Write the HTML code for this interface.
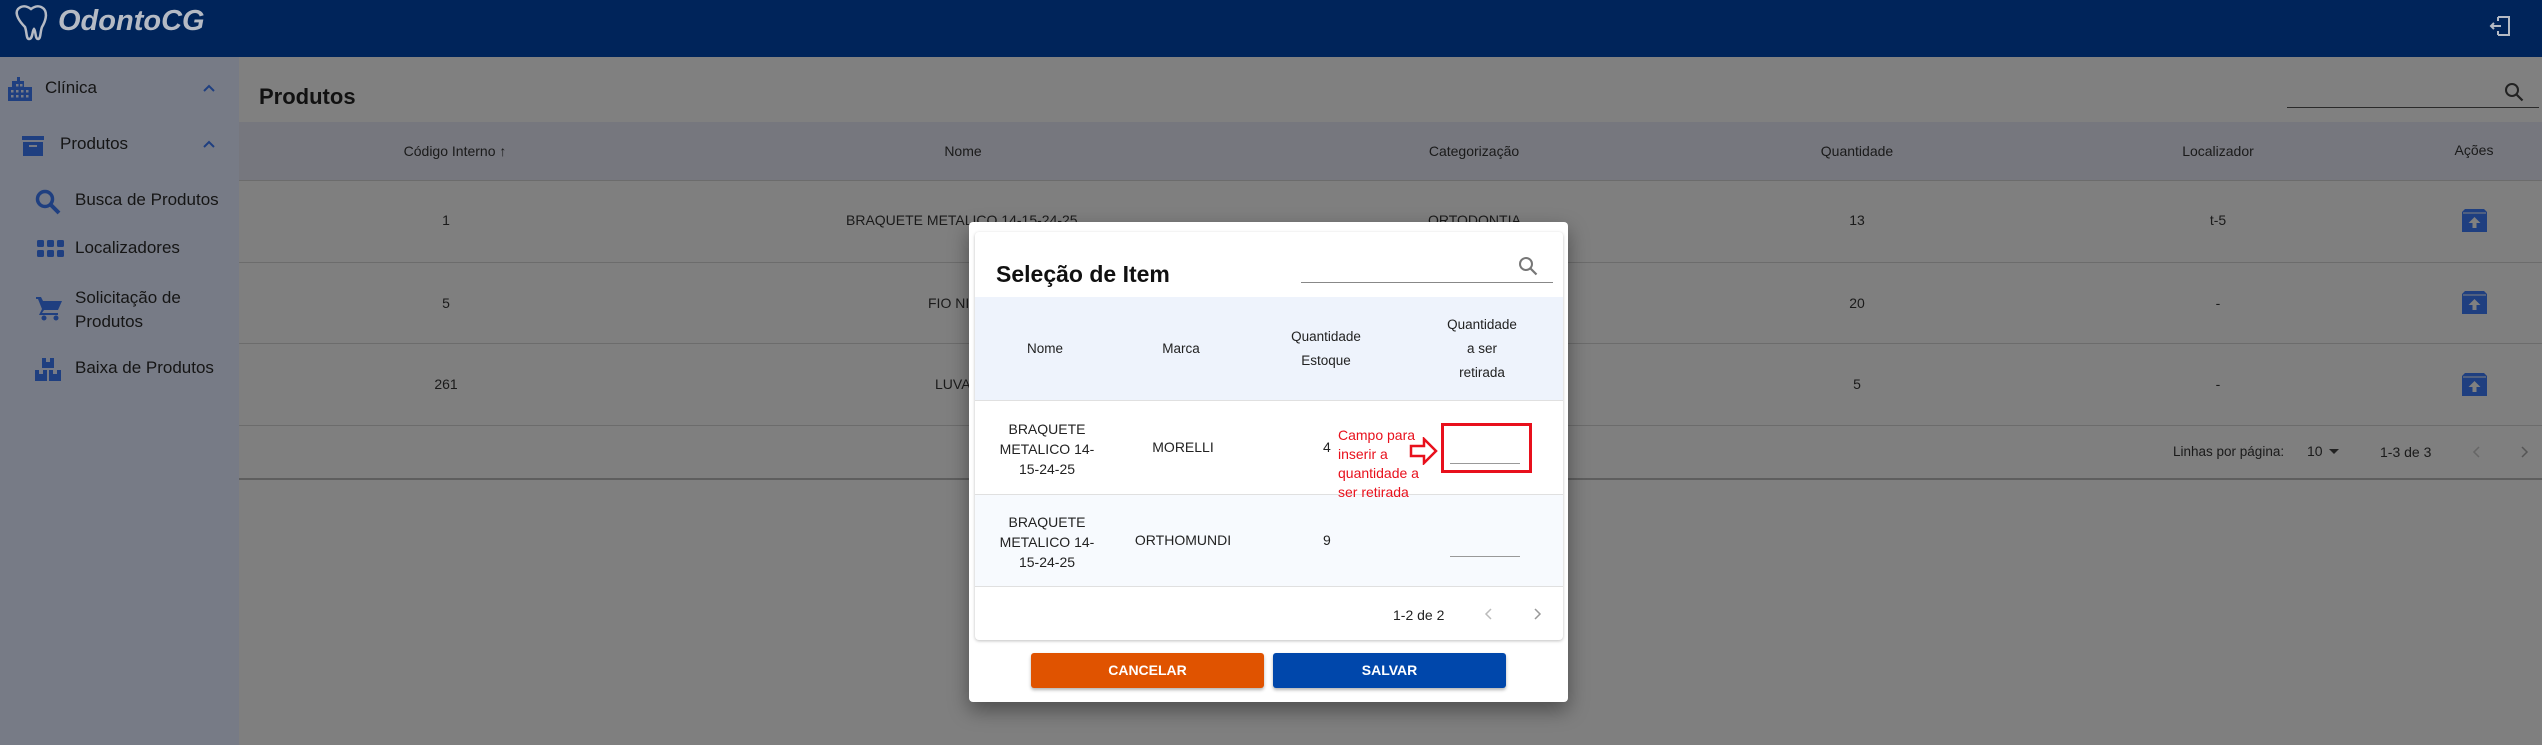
<!DOCTYPE html>
<html><head><meta charset="utf-8"><style>
*{margin:0;padding:0;box-sizing:border-box}
body{width:2542px;height:745px;overflow:hidden;background:#7f7f7f;font-family:"Liberation Sans",sans-serif;position:relative;color:#111}
.abs{position:absolute}
.hdr{left:0;top:0;width:2542px;height:57px;background:#00245a;box-shadow:0 2px 4px rgba(0,0,0,.4)}
.side{left:0;top:57px;width:239px;height:688px;background:#777b86}
.st{font-size:17px;color:#151515;white-space:nowrap}
.c{transform:translateX(-50%);white-space:nowrap}
.th{font-size:14px;color:#1a1a1a}
.td{font-size:14px;color:#1a1a1a}
.hl{height:1px;background:#6c6c6c}
.ic{fill:#1f3f80}
.modal{left:969px;top:222px;width:599px;height:480px;background:#fff;border-radius:4px;box-shadow:0 8px 20px rgba(0,0,0,.4)}
.m{font-size:14px;color:#222}
.mh{font-size:13.5px;color:#222;text-align:center;line-height:24px}
.red{color:#e8101c;font-size:14px;line-height:19px}
</style></head><body>
<div class="abs hdr"></div>
<svg class="abs" style="left:12px;top:3px" width="38" height="38" viewBox="0 0 38 38"><path d="M6 6c4-4 9-3 13 0 4-3 9-4 13 0 4 5 1 13-2 18-2 5-1 12-4 12-3 0-2-8-4-10-2 2-1 10-5 10-3 0-2-7-4-12C8 19 2 11 6 6z" fill="none" stroke="#b5bac4" stroke-width="2.5"/></svg>
<div class="abs" style="left:58px;top:5px;font-size:29px;font-weight:bold;font-style:italic;color:#b5bac4">OdontoCG</div>
<svg class="abs" style="left:2489px;top:15px" width="24" height="22" viewBox="0 0 24 22"><path d="M9 2h11v18H9M9 2v4M9 20v-4M2 11h10M5 8l-3 3 3 3" fill="none" stroke="#b5bac4" stroke-width="2"/></svg>

<div class="abs side"></div>
<svg class="abs" style="left:8px;top:77px" width="24" height="24" viewBox="0 0 24 24"><path class="ic" d="M9 0h3v4h4v6h8v14H0V10h4V4h5z"/><g fill="#777b86"><rect x="3" y="13" width="2.5" height="2.5"/><rect x="8" y="13" width="2.5" height="2.5"/><rect x="13" y="13" width="2.5" height="2.5"/><rect x="18" y="13" width="2.5" height="2.5"/><rect x="3" y="18" width="2.5" height="2.5"/><rect x="8" y="18" width="2.5" height="2.5"/><rect x="13" y="18" width="2.5" height="2.5"/><rect x="18" y="18" width="2.5" height="2.5"/><rect x="8" y="7" width="2.5" height="2.5"/><rect x="12" y="7" width="2.5" height="2.5"/></g></svg>
<div class="abs st" style="left:45px;top:78px">Clínica</div>
<svg class="abs" style="left:202px;top:83px" width="14" height="10"><path d="M2 8l5-5 5 5" fill="none" stroke="#1f3f80" stroke-width="2"/></svg>
<svg class="abs" style="left:22px;top:136px" width="22" height="20" viewBox="0 0 22 20"><rect class="ic" x="0" y="0" width="22" height="4"/><path class="ic" d="M1 6h20v14H1z"/><rect x="7" y="9" width="8" height="2" fill="#777b86"/></svg>
<div class="abs st" style="left:60px;top:134px">Produtos</div>
<svg class="abs" style="left:202px;top:139px" width="14" height="10"><path d="M2 8l5-5 5 5" fill="none" stroke="#1f3f80" stroke-width="2"/></svg>
<svg class="abs" style="left:35px;top:189px" width="26" height="26" viewBox="0 0 26 26"><circle cx="10" cy="10" r="7.5" fill="none" stroke="#1f3f80" stroke-width="3.5"/><path d="M15 15l9 9" stroke="#1f3f80" stroke-width="4"/></svg>
<div class="abs st" style="left:75px;top:190px">Busca de Produtos</div>
<svg class="abs" style="left:37px;top:240px" width="27" height="17"><g class="ic"><rect x="0" y="0" width="7" height="7" rx="1.5"/><rect x="10" y="0" width="7" height="7" rx="1.5"/><rect x="20" y="0" width="7" height="7" rx="1.5"/><rect x="0" y="10" width="7" height="7" rx="1.5"/><rect x="10" y="10" width="7" height="7" rx="1.5"/><rect x="20" y="10" width="7" height="7" rx="1.5"/></g></svg>
<div class="abs st" style="left:75px;top:238px">Localizadores</div>
<svg class="abs" style="left:36px;top:296px" width="26" height="25" viewBox="0 0 26 25"><path class="ic" d="M0 1h5l2 4h19l-4 9H8L6 17h16v2H3l3-6L2 3H0z"/><circle class="ic" cx="8" cy="22" r="2.5"/><circle class="ic" cx="20" cy="22" r="2.5"/></svg>
<div class="abs st" style="left:75px;top:286px;line-height:24px">Solicitação de<br>Produtos</div>
<svg class="abs" style="left:35px;top:358px" width="26" height="23" viewBox="0 0 26 23"><g class="ic"><rect x="7" y="0" width="12" height="10"/><rect x="0" y="12" width="12" height="11"/><rect x="14" y="12" width="12" height="11"/></g><g fill="#777b86"><rect x="11" y="0" width="4" height="4"/><rect x="4" y="12" width="4" height="4"/><rect x="18" y="12" width="4" height="4"/></g></svg>
<div class="abs st" style="left:75px;top:358px">Baixa de Produtos</div>

<div class="abs" style="left:239px;top:57px;width:2303px;height:65px;background:#808080"></div>
<div class="abs" style="left:259px;top:84px;font-size:22px;font-weight:bold;color:#111">Produtos</div>
<div class="abs" style="left:2287px;top:107px;width:252px;height:1px;background:#2a2a2a"></div>
<svg class="abs" style="left:2504px;top:82px" width="20" height="20" viewBox="0 0 20 20"><circle cx="8" cy="8" r="6" fill="none" stroke="#222" stroke-width="2"/><path d="M12.5 12.5l6 6" stroke="#222" stroke-width="2.2"/></svg>
<div class="abs" style="left:239px;top:122px;width:2303px;height:58px;background:#76777e"></div>
<div class="abs hl" style="left:239px;top:180px;width:2303px"></div>
<div class="abs hl" style="left:239px;top:262px;width:2303px"></div>
<div class="abs hl" style="left:239px;top:343px;width:2303px"></div>
<div class="abs hl" style="left:239px;top:425px;width:2303px"></div>
<div class="abs" style="left:239px;top:478px;width:2303px;height:2px;background:#5e5e5e"></div>
<div class="abs th c" style="left:455px;top:143px">Código Interno &#8593;</div>
<div class="abs th c" style="left:963px;top:143px">Nome</div>
<div class="abs th c" style="left:1474px;top:143px">Categorização</div>
<div class="abs th c" style="left:1857px;top:143px">Quantidade</div>
<div class="abs th c" style="left:2218px;top:143px">Localizador</div>
<div class="abs th c" style="left:2474px;top:142px">Ações</div>
<div class="abs td c" style="left:446px;top:212px">1</div>
<div class="abs td" style="left:846px;top:212px">BRAQUETE METALICO 14-15-24-25</div>
<div class="abs td" style="left:1428px;top:212px">ORTODONTIA</div>
<div class="abs td c" style="left:1857px;top:212px">13</div>
<div class="abs td c" style="left:2218px;top:212px">t-5</div>
<div class="abs td c" style="left:446px;top:295px">5</div>
<div class="abs td" style="left:928px;top:295px">FIO NI</div>
<div class="abs td c" style="left:1857px;top:295px">20</div>
<div class="abs td c" style="left:2218px;top:295px">-</div>
<div class="abs td c" style="left:446px;top:376px">261</div>
<div class="abs td" style="left:935px;top:376px">LUVA</div>
<div class="abs td c" style="left:1857px;top:376px">5</div>
<div class="abs td c" style="left:2218px;top:376px">-</div>
<svg class="abs" style="left:2462px;top:209px" width="25" height="23" viewBox="0 0 25 23"><path class="ic" d="M3 0h19l3 3v20H0V3z"/><path d="M1 4h23" stroke="#808080" stroke-width="1"/><path d="M12.5 8l6 6h-4v5h-4v-5h-4z" fill="#808080"/></svg>
<svg class="abs" style="left:2462px;top:291px" width="25" height="23" viewBox="0 0 25 23"><path class="ic" d="M3 0h19l3 3v20H0V3z"/><path d="M1 4h23" stroke="#808080" stroke-width="1"/><path d="M12.5 8l6 6h-4v5h-4v-5h-4z" fill="#808080"/></svg>
<svg class="abs" style="left:2462px;top:373px" width="25" height="23" viewBox="0 0 25 23"><path class="ic" d="M3 0h19l3 3v20H0V3z"/><path d="M1 4h23" stroke="#808080" stroke-width="1"/><path d="M12.5 8l6 6h-4v5h-4v-5h-4z" fill="#808080"/></svg>
<div class="abs td" style="left:2173px;top:444px;font-size:13.5px">Linhas por página:</div>
<div class="abs td" style="left:2307px;top:443px">10</div>
<svg class="abs" style="left:2329px;top:449px" width="12" height="6"><path d="M0 0h10l-5 5z" fill="#222"/></svg>
<div class="abs td" style="left:2380px;top:444px">1-3 de 3</div>
<svg class="abs" style="left:2472px;top:445px" width="10" height="14"><path d="M7 2L2 7l5 5" fill="none" stroke="#666" stroke-width="1.5"/></svg>
<svg class="abs" style="left:2519px;top:445px" width="10" height="14"><path d="M3 2l5 5-5 5" fill="none" stroke="#555" stroke-width="1.5"/></svg>

<div class="abs modal"></div>
<div class="abs" style="left:975px;top:232px;width:588px;height:408px;background:#fff;border-radius:4px;box-shadow:0 1px 3px rgba(0,0,0,.25)"></div>
<div class="abs" style="left:996px;top:261px;font-size:23px;font-weight:bold;color:#111">Seleção de Item</div>
<div class="abs" style="left:1301px;top:282px;width:252px;height:1px;background:#888"></div>
<svg class="abs" style="left:1518px;top:256px" width="20" height="20" viewBox="0 0 20 20"><circle cx="8" cy="8" r="6" fill="none" stroke="#777" stroke-width="2"/><path d="M12.5 12.5l6 6" stroke="#777" stroke-width="2.2"/></svg>
<div class="abs" style="left:975px;top:297px;width:588px;height:104px;background:#eef3fc;border-bottom:1px solid #e0e0e0"></div>
<div class="abs mh c" style="left:1045px;top:337px">Nome</div>
<div class="abs mh c" style="left:1181px;top:337px">Marca</div>
<div class="abs mh c" style="left:1326px;top:325px">Quantidade<br>Estoque</div>
<div class="abs mh c" style="left:1482px;top:313px">Quantidade<br>a ser<br>retirada</div>
<div class="abs" style="left:975px;top:494px;width:588px;height:93px;background:#f7fafe;border-top:1px solid #e0e0e0;border-bottom:1px solid #e0e0e0"></div>
<div class="abs m c" style="left:1047px;top:419px;text-align:center;line-height:20px">BRAQUETE<br>METALICO 14-<br>15-24-25</div>
<div class="abs m c" style="left:1183px;top:439px">MORELLI</div>
<div class="abs m" style="left:1323px;top:439px">4</div>
<div class="abs m c" style="left:1047px;top:512px;text-align:center;line-height:20px">BRAQUETE<br>METALICO 14-<br>15-24-25</div>
<div class="abs m c" style="left:1183px;top:532px">ORTHOMUNDI</div>
<div class="abs m" style="left:1323px;top:532px">9</div>
<div class="abs red" style="left:1338px;top:426px">Campo para<br>inserir a<br>quantidade a<br>ser retirada</div>
<svg class="abs" style="left:1409px;top:437px" width="30" height="28" viewBox="0 0 30 28"><path d="M2 9h13V2l12 12-12 12v-7H2z" fill="none" stroke="#e8101c" stroke-width="2.5"/></svg>
<div class="abs" style="left:1441px;top:423px;width:91px;height:50px;border:3px solid #e8101c"></div>
<div class="abs" style="left:1450px;top:463px;width:70px;height:1px;background:#999"></div>
<div class="abs" style="left:1450px;top:556px;width:70px;height:1px;background:#999"></div>
<div class="abs m" style="left:1393px;top:607px">1-2 de 2</div>
<svg class="abs" style="left:1484px;top:607px" width="10" height="14"><path d="M7 2L2 7l5 5" fill="none" stroke="#bbb" stroke-width="1.5"/></svg>
<svg class="abs" style="left:1532px;top:607px" width="10" height="14"><path d="M3 2l5 5-5 5" fill="none" stroke="#999" stroke-width="1.5"/></svg>
<div class="abs" style="left:1031px;top:653px;width:233px;height:35px;background:#e05300;border-radius:3px;box-shadow:0 2px 3px rgba(0,0,0,.3);color:#fff;font-weight:bold;font-size:14px;text-align:center;line-height:35px">CANCELAR</div>
<div class="abs" style="left:1273px;top:653px;width:233px;height:35px;background:#0047ab;border-radius:3px;box-shadow:0 2px 3px rgba(0,0,0,.3);color:#fff;font-weight:bold;font-size:14px;text-align:center;line-height:35px">SALVAR</div>
</body></html>
